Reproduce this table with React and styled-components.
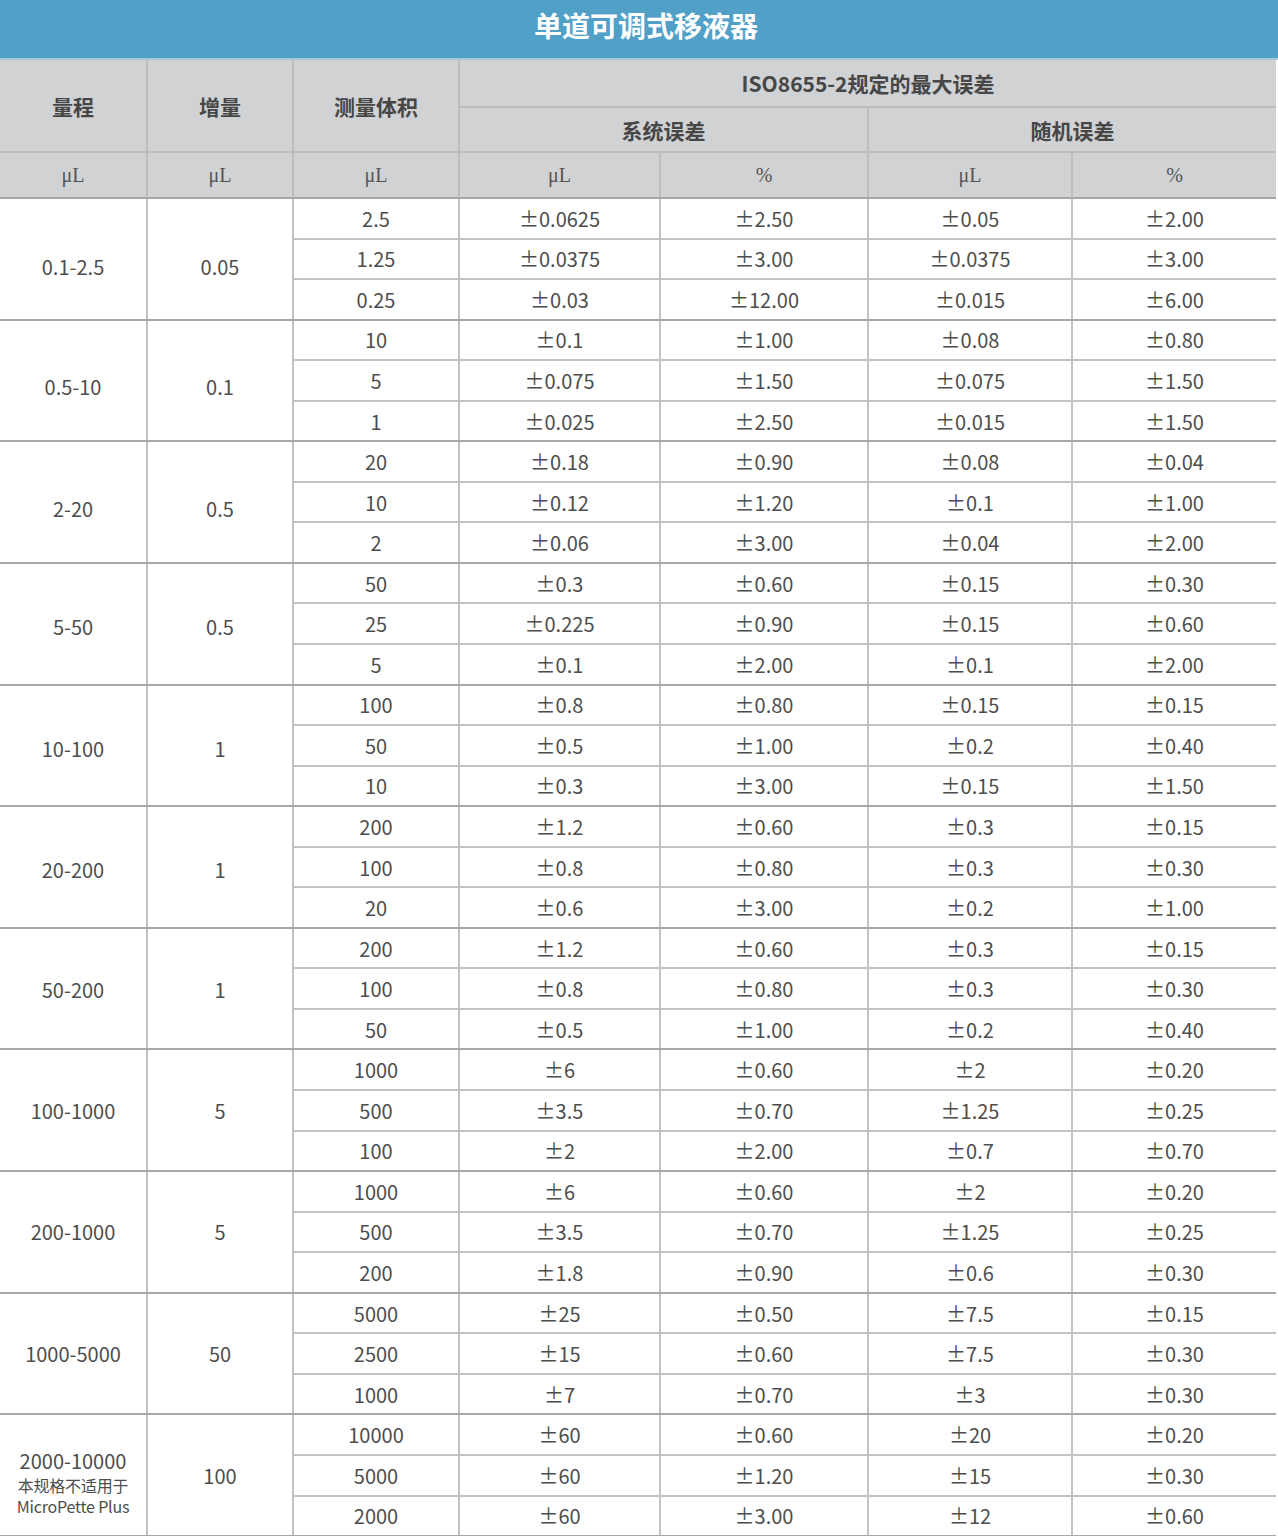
import React from "react";
import styled, { createGlobalStyle } from "styled-components";

const GlobalStyle = createGlobalStyle`
  html, body {
    margin: 0;
    padding: 0;
    background: #ffffff;
  }
  body {
    font-family: "Noto Sans CJK SC", "Noto Sans", sans-serif;
  }
`;

const Page = styled.div`
  width: 1278px;
`;

const TitleBar = styled.div`
  height: 50px;
  padding: 0 0 8px 14px;
  background: #51a0c8;
  border-bottom: 2px solid #a9c7d8;
  display: flex;
  align-items: center;
  justify-content: center;
  color: #ffffff;
  font-size: 28px;
  font-weight: 700;
`;

const Table = styled.table`
  width: 1276px;
  border-collapse: collapse;
  table-layout: fixed;
  color: #4d4d4d;
`;

const Head = styled.th`
  background: #d1d2d4;
  font-weight: 700;
  font-size: 21px;
  color: #464646;
  border: 2px solid #bdbdbd;
  border-top: none;
  padding: 0;
  &:first-child { border-left: none; }
  &:last-child { border-right: none; }
`;

const Unit = styled.th`
  background: #d1d2d4;
  font-family: "Liberation Serif", "Times New Roman", serif;
  font-weight: 400;
  font-size: 20px;
  color: #555555;
  border: 2px solid #bdbdbd;
  border-bottom: 2px solid #a6a6a6;
  padding: 0;
  &:first-child { border-left: none; }
  &:last-child { border-right: none; }
`;

const Cell = styled.td`
  text-align: center;
  font-size: 20px;
  font-weight: 400;
  padding: 0;
  border: 2px solid #c3c3c3;
  border-top: ${(p) => (p.$groupStart ? "2px solid #a8a8a8" : "2px solid #c3c3c3")};
  border-bottom: ${(p) => (p.$groupEnd ? "2px solid #a8a8a8" : "2px solid #c3c3c3")};
  &:last-child { border-right: none; }
`;

const SpanCell = styled(Cell)`
  padding-top: ${(p) => p.$shift * 2}px;
  line-height: 1.25;
`;

const RangeCell = styled(SpanCell)`
  border-left: none;
`;

const RangeMain = styled.div`
  line-height: 28px;
`;

const Note = styled.div`
  font-size: 16px;
  line-height: 21px;
  letter-spacing: -0.2px;
`;

const Row = styled.tr`
  height: 40.55px;
`;

const groups = [
  { range: "0.1-2.5", inc: "0.05", shift: 8, rows: [
    ["2.5", "0.0625", "2.50", "0.05", "2.00"],
    ["1.25", "0.0375", "3.00", "0.0375", "3.00"],
    ["0.25", "0.03", "12.00", "0.015", "6.00"],
  ] },
  { range: "0.5-10", inc: "0.1", shift: 6, rows: [
    ["10", "0.1", "1.00", "0.08", "0.80"],
    ["5", "0.075", "1.50", "0.075", "1.50"],
    ["1", "0.025", "2.50", "0.015", "1.50"],
  ] },
  { range: "2-20", inc: "0.5", shift: 6, rows: [
    ["20", "0.18", "0.90", "0.08", "0.04"],
    ["10", "0.12", "1.20", "0.1", "1.00"],
    ["2", "0.06", "3.00", "0.04", "2.00"],
  ] },
  { range: "5-50", inc: "0.5", shift: 3, rows: [
    ["50", "0.3", "0.60", "0.15", "0.30"],
    ["25", "0.225", "0.90", "0.15", "0.60"],
    ["5", "0.1", "2.00", "0.1", "2.00"],
  ] },
  { range: "10-100", inc: "1", shift: 3, rows: [
    ["100", "0.8", "0.80", "0.15", "0.15"],
    ["50", "0.5", "1.00", "0.2", "0.40"],
    ["10", "0.3", "3.00", "0.15", "1.50"],
  ] },
  { range: "20-200", inc: "1", shift: 2, rows: [
    ["200", "1.2", "0.60", "0.3", "0.15"],
    ["100", "0.8", "0.80", "0.3", "0.30"],
    ["20", "0.6", "3.00", "0.2", "1.00"],
  ] },
  { range: "50-200", inc: "1", shift: 1, rows: [
    ["200", "1.2", "0.60", "0.3", "0.15"],
    ["100", "0.8", "0.80", "0.3", "0.30"],
    ["50", "0.5", "1.00", "0.2", "0.40"],
  ] },
  { range: "100-1000", inc: "5", shift: 0, rows: [
    ["1000", "6", "0.60", "2", "0.20"],
    ["500", "3.5", "0.70", "1.25", "0.25"],
    ["100", "2", "2.00", "0.7", "0.70"],
  ] },
  { range: "200-1000", inc: "5", shift: 0, rows: [
    ["1000", "6", "0.60", "2", "0.20"],
    ["500", "3.5", "0.70", "1.25", "0.25"],
    ["200", "1.8", "0.90", "0.6", "0.30"],
  ] },
  { range: "1000-5000", inc: "50", shift: 0, rows: [
    ["5000", "25", "0.50", "7.5", "0.15"],
    ["2500", "15", "0.60", "7.5", "0.30"],
    ["1000", "7", "0.70", "3", "0.30"],
  ] },
  { range: "2000-10000", inc: "100", shift: 0, note: true, rows: [
    ["10000", "60", "0.60", "20", "0.20"],
    ["5000", "60", "1.20", "15", "0.30"],
    ["2000", "60", "3.00", "12", "0.60"],
  ] },
];

const widths = [147, 146, 166, 201, 208, 204, 204];

export default function App() {
  return (
    <Page>
      <GlobalStyle />
      <TitleBar>单道可调式移液器</TitleBar>
      <Table>
        <colgroup>
          {widths.map((w, i) => <col key={i} style={{ width: w }} />)}
        </colgroup>
        <thead>
          <tr style={{ height: 47 }}>
            <Head rowSpan={2}>量程</Head>
            <Head rowSpan={2}>增量</Head>
            <Head rowSpan={2}>测量体积</Head>
            <Head colSpan={4}>ISO8655-2规定的最大误差</Head>
          </tr>
          <tr style={{ height: 45 }}>
            <Head colSpan={2}>系统误差</Head>
            <Head colSpan={2}>随机误差</Head>
          </tr>
          <tr style={{ height: 46 }}>
            <Unit>μL</Unit>
            <Unit>μL</Unit>
            <Unit>μL</Unit>
            <Unit>μL</Unit>
            <Unit>%</Unit>
            <Unit>μL</Unit>
            <Unit>%</Unit>
          </tr>
        </thead>
        <tbody>
          {groups.map((g, gi) =>
            g.rows.map((r, ri) => (
              <Row key={`${gi}-${ri}`}>
                {ri === 0 && (
                  <>
                    <RangeCell rowSpan={3} $shift={g.note ? 7 : g.shift} $groupStart $groupEnd>
                      {g.note ? (
                        <>
                          <RangeMain>{g.range}</RangeMain>
                          <Note>本规格不适用于</Note>
                          <Note>MicroPette Plus</Note>
                        </>
                      ) : (
                        g.range
                      )}
                    </RangeCell>
                    <SpanCell rowSpan={3} $shift={g.shift} $groupStart $groupEnd>{g.inc}</SpanCell>
                  </>
                )}
                {r.map((v, ci) => (
                  <Cell key={ci} $groupStart={ri === 0} $groupEnd={ri === 2}>
                    {ci === 0 ? v : `±${v}`}
                  </Cell>
                ))}
              </Row>
            ))
          )}
        </tbody>
      </Table>
    </Page>
  );
}
